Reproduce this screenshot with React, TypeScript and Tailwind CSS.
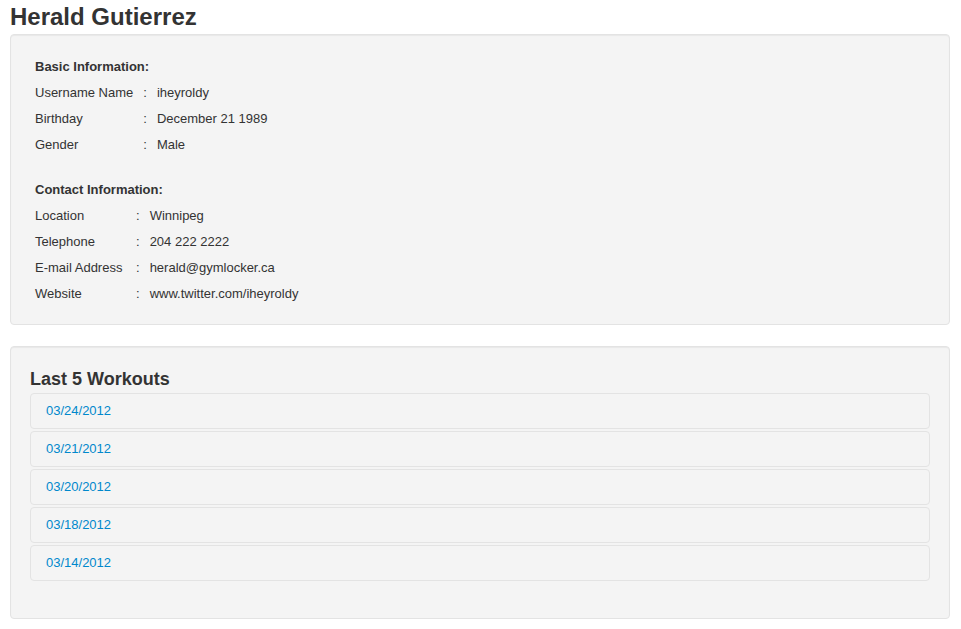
const basicInfo = [
  ['Username Name', 'iheyroldy'],
  ['Birthday', 'December 21 1989'],
  ['Gender', 'Male'],
]

const contactInfo = [
  ['Location', 'Winnipeg'],
  ['Telephone', '204 222 2222'],
  ['E-mail Address', 'herald@gymlocker.ca'],
  ['Website', 'www.twitter.com/iheyroldy'],
]

const workouts = ['03/24/2012', '03/21/2012', '03/20/2012', '03/18/2012', '03/14/2012']

function InfoTable({ title, rows, labelWidth }: { title: string; rows: string[][]; labelWidth: string }) {
  return (
    <table className="border-collapse">
      <thead>
        <tr>
          <th colSpan={3} className="px-[5px] h-[26px] text-left font-bold align-middle">
            {title}
          </th>
        </tr>
      </thead>
      <tbody>
        {rows.map(([label, value]) => (
          <tr key={label}>
            <td className={`px-[5px] h-[26px] align-middle whitespace-nowrap ${labelWidth}`}>{label}</td>
            <td className="px-[5px] h-[26px] align-middle">:</td>
            <td className="px-[5px] h-[26px] align-middle">{value}</td>
          </tr>
        ))}
      </tbody>
    </table>
  )
}

export default function App() {
  return (
    <div className="min-h-screen bg-white font-['Liberation_Sans',Arial,sans-serif] text-[13px] leading-[18px] text-[#333333]">
      <div className="pl-[10px] pr-[11px]">
        <h1 className="text-[24px] leading-[34px] font-bold">Herald Gutierrez</h1>

        <div className="mb-[21px] rounded-[4px] border border-[#e3e3e3] bg-[#f4f4f4] px-[19px] pt-[19px] pb-[17px] shadow-[inset_0_1px_1px_rgba(0,0,0,0.05)]">
          <InfoTable title="Basic Information:" rows={basicInfo} labelWidth="w-[108px]" />
          <div className="h-[19px]" />
          <InfoTable title="Contact Information:" rows={contactInfo} labelWidth="w-[101px]" />
        </div>

        <div className="rounded-[4px] border border-[#e3e3e3] bg-[#f4f4f4] p-[19px] shadow-[inset_0_1px_1px_rgba(0,0,0,0.05)]">
          <h3 className="text-[18px] leading-[27px] font-bold">Last 5 Workouts</h3>
          <ul className="mb-[18px] flex flex-col gap-[2px]">
            {workouts.map((date) => (
              <li
                key={date}
                className="flex h-[36px] items-center rounded-[4px] border border-[#e3e3e3] bg-[#f4f4f4] pl-[15px]"
              >
                <a href="#" className="text-[#0088cc]">
                  {date}
                </a>
              </li>
            ))}
          </ul>
        </div>
      </div>
    </div>
  )
}
